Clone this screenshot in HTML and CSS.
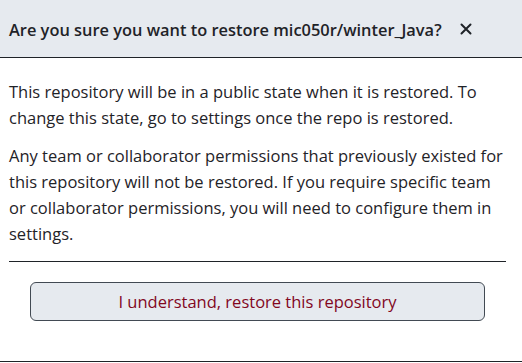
FILE: index.html
```html
<!DOCTYPE html>
<html lang="en">
<head>
    <meta charset="UTF-8">
    <meta name="viewport" content="width=device-width, initial-scale=1.0">
    <title>Restore repository</title>
    <link rel="stylesheet" href="styles.css">
</head>
<body>
    <div class="dialog">
        <div class="dialog-header">
            <h1 class="dialog-title">Are you sure you want to restore mic050r/winter_Java?</h1>
            <button class="close-btn" aria-label="Close">
                <svg width="16" height="16" viewBox="0 0 16 16"><path d="M3.5 3.5l9 9M12.5 3.5l-9 9" stroke="#1f2328" stroke-width="2" stroke-linecap="round"/></svg>
            </button>
        </div>
        <div class="dialog-body">
            <p>This repository will be in a public state when it is restored. To change this state, go to settings once the repo is restored.</p>
            <p>Any team or collaborator permissions that previously existed for this repository will not be restored. If you require specific team or collaborator permissions, you will need to configure them in settings.</p>
            <hr class="divider">
            <button class="restore-btn">I understand, restore this repository</button>
        </div>
    </div>
    <div class="page-bottom"></div>
</body>
</html>
```

FILE: styles.css
```css
body {
    margin: 0;
    font-family: "Open Sans", "Noto Sans", Arial, sans-serif;
    color: #1f2328;
    background-color: #fff;
    height: 363px;
    display: flex;
    flex-direction: column;
}
.dialog {
    flex: 1;
}
.dialog-header {
    display: flex;
    align-items: center;
    justify-content: space-between;
    height: 57px;
    padding: 0 48px 0 9px;
    background-color: #e6eaef;
    border-bottom: 1px solid #1f2328;
}
.dialog-title {
    margin: 0 0 -1px;
    font-size: 16.4px;
    font-weight: 600;
}
.close-btn {
    background: none;
    border: none;
    padding: 0;
    display: flex;
    cursor: pointer;
}
.dialog-body {
    padding: 21px 16px 0 9px;
}
.dialog-body p {
    margin: 0 0 12px;
    font-size: 16.5px;
    line-height: 26px;
}
.divider {
    border: none;
    border-top: 1px solid #1f2328;
    margin: 14px 0 20px;
}
.restore-btn {
    display: block;
    width: calc(100% - 42px);
    height: 39px;
    margin: 0 auto;
    font-family: inherit;
    font-size: 16.5px;
    color: #82071e;
    background-color: #e6eaef;
    border: 1px solid #424a53;
    border-radius: 6px;
    cursor: pointer;
}
.page-bottom {
    height: 1px;
    margin-bottom: 1px;
    background-color: #1f2328;
}
```
